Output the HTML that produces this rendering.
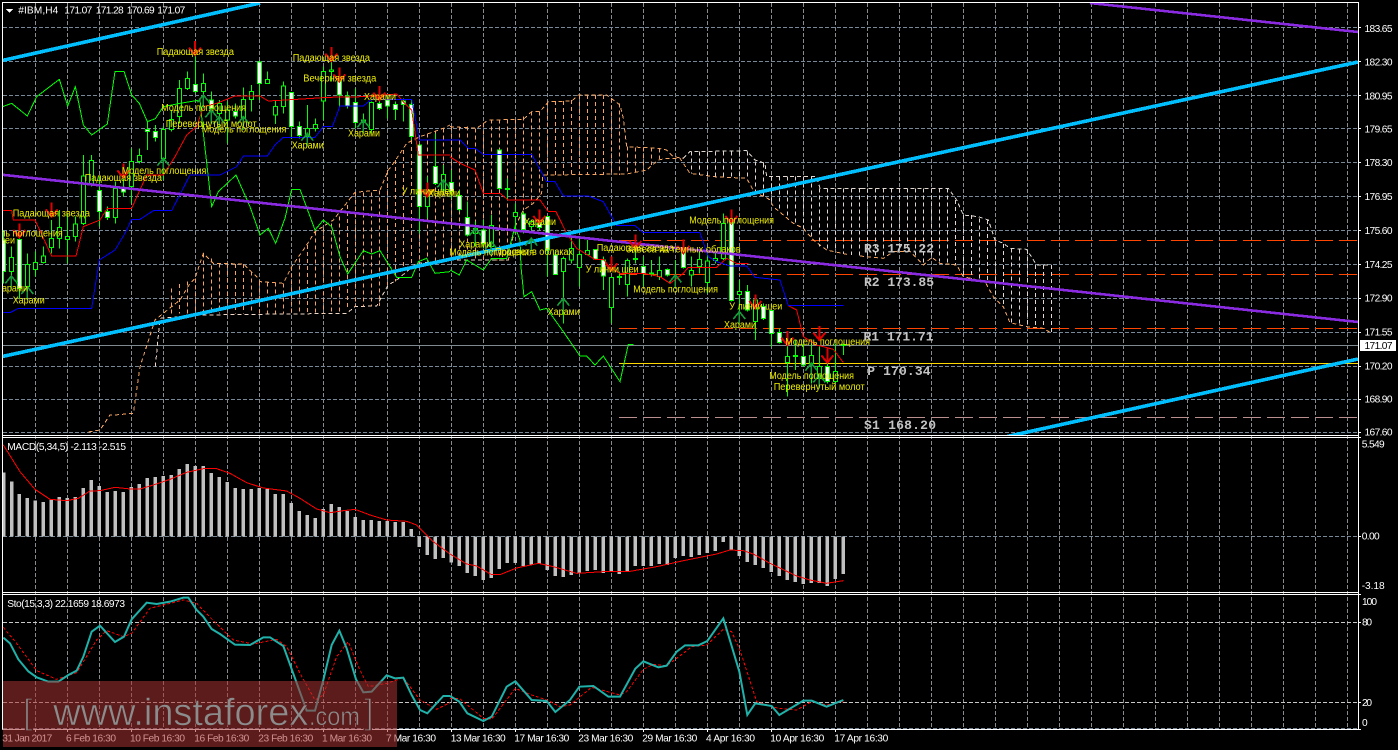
<!DOCTYPE html>
<html><head><meta charset="utf-8"><title>#IBM,H4</title>
<style>
html,body{margin:0;padding:0;background:#000;width:1398px;height:750px;overflow:hidden}
svg{display:block;shape-rendering:crispEdges}
text{font-family:"Liberation Sans","Noto Sans CJK SC",sans-serif}
.l text{font-size:10px;fill:#f0f000}
.a text{font-size:10.2px;fill:#fff}
.m text{font-family:"Liberation Mono",monospace;font-weight:bold;font-size:13px;fill:#c4c4c4}
.g{fill:none;stroke:#778899;stroke-dasharray:4 2}
.s{fill:none;stroke-width:3}
</style></head><body>
<svg width="1398" height="750" viewBox="0 0 1398 750" xmlns="http://www.w3.org/2000/svg">
<defs>
<clipPath id="c1"><rect x="3" y="3" width="1355" height="432"/></clipPath>
<clipPath id="c2"><rect x="3" y="438" width="1355" height="154"/></clipPath>
<path id="d" d="M0 -42V0M-18 -22L0 0L18 -22" fill="none" stroke="#e00000" stroke-width="6"/>
<path id="u" d="M0 40V0M-18 22L0 0L18 22" fill="none" stroke="#169a3a" stroke-width="5"/>
</defs>
<rect width="1398" height="750" fill="#000"/>

<!-- vertical grid -->
<path class="g" d="M35.5 3V729M67.5 3V729M99.5 3V729M131.5 3V729M163.5 3V729M195.5 3V729M227.5 3V729M259.5 3V729M291.5 3V729M323.5 3V729M355.5 3V729M387.5 3V729M419.5 3V729M451.5 3V729M483.5 3V729M515.5 3V729M547.5 3V729M579.5 3V729M611.5 3V729M643.5 3V729M675.5 3V729M707.5 3V729M739.5 3V729M771.5 3V729M803.5 3V729M835.5 3V729M867.5 3V729M899.5 3V729M931.5 3V729M963.5 3V729M995.5 3V729M1027.5 3V729M1059.5 3V729M1091.5 3V729M1123.5 3V729M1155.5 3V729M1187.5 3V729M1219.5 3V729M1251.5 3V729M1283.5 3V729M1315.5 3V729M1347.5 3V729" style="stroke:#858b90"/>
<!-- horizontal grid -->
<path class="g" d="M3 27.5H1358M3 61.5H1358M3 95.5H1358M3 128.5H1358M3 162.5H1358M3 196.5H1358M3 230.5H1358M3 264.5H1358M3 298.5H1358M3 332.5H1358M3 366.5H1358M3 399.5H1358M3 432.5H1358M3 536.5H1358M3 728.5H1358"/>
<path class="g" d="M3 622.5H1358M3 702.5H1358" style="stroke:#c8c8c8"/>

<g clip-path="url(#c1)">
<!-- levels -->
<path d="M619 240.5H1358M619 274.5H1358M619 328.5H1358" fill="none" stroke="#ff4500" stroke-dasharray="18 6"/>
<path d="M619 417.5H1358" fill="none" stroke="#bc8f8f" stroke-dasharray="18 6"/>
<path d="M619 363.5H1358" fill="none" stroke="#ffd700"/>
<path d="M3 345.5H1358" fill="none" stroke="#7f8a90"/>

<!-- cloud left (z1 coords) -->
<g transform="scale(.33333)" fill="none" stroke="#f4a460" stroke-width="3" stroke-dasharray="12 9">
<path d="M265 1296L300 1290L330 1245L345 1245L400 1240L420 1100L465 960L540 900L570 850L585 835L610 760L640 790L730 792L770 830L780 845L850 850L875 800L920 735L945 695L1000 660L1065 577L1140 570L1165 510L1180 490L1220 430L1260 410L1330 385L1350 375"/>
<path d="M466 1100L480 955L600 945L1040 940L1065 920L1130 918L1145 890L1165 855L1190 840L1250 790L1350 780" stroke="#f0d8c8"/>
<path d="M514 865V940M538 852V940M562 845V940M586 835V940M610 760V940M634 775V940M658 790V940M682 792V940M706 792V940M730 792V940M754 815V940M778 845V940M802 848V940M826 848V940M850 850V940M874 800V940M898 775V940M922 735V940M946 695V940M970 685V940M994 670V940M1018 650V940M1042 615V925M1066 577V920M1090 577V920M1114 577V920M1138 572V918M1162 510V855M1186 480V845M1210 450V800M1234 420V790M1258 410V780M1282 400V785M1306 395V785M1330 385V780"/>
</g>
<!-- cloud mid (z2 coords) -->
<g transform="scale(.33333) translate(1350 180)" fill="none" stroke="#f4a460" stroke-width="3" stroke-dasharray="12 9">
<path d="M0 200L80 205L115 180L220 178L245 155L270 155L295 125L365 123L385 105L470 105L510 135L520 175L530 260L625 265L650 270L670 290L700 295"/>
<path d="M130 600L175 600L195 500L220 450L250 430L275 400L278 345L295 345L530 342L590 330L625 300L650 295L690 295L720 340L790 350L890 355L915 400L945 410L960 420L970 440L1030 490L1060 505L1090 540L1130 570L1200 585"/>
<path d="M0 600H175" stroke="#f0d8c8"/>
<path d="M4 200V600M28 200V600M52 200V600M76 205V600M100 190V600M124 178V600M148 178V600M172 178V600M196 178V500M220 170V450M244 155V430M268 155V410M292 125V345M316 123V345M340 123V345M364 120V345M388 105V345M412 105V345M436 105V345M460 105V345M484 115V345M508 130V345M532 260V342M556 262V338M580 262V332M604 262V315M628 266V297"/>
<g stroke="#e0d8d0">
<path d="M700 295L720 275L890 272L915 300L945 310L950 350L1100 350L1110 385L1236 385"/>
<path d="M724 275V340M748 275V345M772 275V348M796 275V350M820 275V352M844 275V353M868 275V354M892 275V355M916 305V395M940 310V410M964 350V425M988 350V450M1012 350V470M1036 350V490M1060 350V505M1084 350V530M1108 385V560M1132 385V570M1156 385V575M1180 385V580M1204 385V585M1228 385V590"/>
</g>
</g>
<!-- cloud right (z7 coords) -->
<g transform="scale(.33333) translate(2580 510)" fill="none" stroke="#e0d8d0" stroke-width="3" stroke-dasharray="12 9">
<path d="M5 55H265L290 90L310 135L355 140L385 150L405 210L430 220L450 235L500 238L530 285H575"/>
<path d="M22 55V258M46 55V265M70 55V265M94 55V245M118 55V245M142 55V245M166 55V258M190 55V285M214 55V262M238 55V275M262 55V280M286 90V285M310 135V320M334 135V325M358 145V330M382 150V335M406 215V380M430 222V410M454 235V458M478 238V462M502 240V470M526 285V473M550 285V475M574 285V490"/>
<path d="M0 258L70 265L100 245L150 245L190 285L215 262L240 280L290 285L310 320L375 335L400 380L430 410L450 458L500 470L550 475L575 490" stroke="#f4a460"/>
</g>

<!-- candles z1 -->
<g transform="scale(.33333)" stroke="#00ff00" stroke-width="3" fill="none">
<path d="M10 690V850M34 740V860M58 700V895M82 760V895M106 755V830M130 740V790M154 660V760M178 630V745M202 640V790M226 650V725M250 465V675M274 465V560M298 530V680M322 620V660M346 545V670M370 500V590M394 445V610M418 445V490M442 365V450M466 375V425M490 380V540M514 330V395M538 240V370M562 215V270M586 125V280M610 220V300M634 275V345M658 300V350M682 305V430M706 310V355M730 262V360M754 255V335M778 183V300M802 215V250M826 300V372M850 245V340M874 277V415M898 365V415M922 315V430M946 355V395M970 200V360M994 170V245M1018 205V320M1042 275V325M1066 265V385M1090 340V400M1114 305V400M1138 300V330M1162 290V355M1186 305V360M1210 295V365M1234 300V420"/>
<path d="M28 772h12V815h-12zM76 793h12V860h-12zM100 787h12V808h-12zM124 768h12V787h-12zM148 715h12V743h-12zM172 683h12V716h-12zM196 710h12V718h-12zM220 672h12V710h-12zM244 528h12V670h-12zM268 482h12V555h-12zM340 565h12V652h-12zM388 485h12V560h-12zM412 467h12V485h-12zM484 388h12V475h-12zM508 358h12V388h-12zM532 265h12V350h-12zM556 235h12V265h-12zM604 250h12V275h-12zM652 310h12V340h-12zM676 330h12V360h-12zM724 298h12V355h-12zM748 275h12V298h-12zM796 238h12V250h-12zM820 320h12V345h-12zM844 258h12V320h-12zM916 385h12V410h-12zM940 374h12V385h-12zM964 215h12V303h-12zM988 210h12V214h-12zM1084 360h12V368h-12zM1108 308h12V388h-12z" fill="#000"/>
<path d="M4 720h12V815h-12zM52 718h12V865h-12zM292 572h12V635h-12zM316 635h12V652h-12zM364 566h12V576h-12zM436 388h12V395h-12zM460 395h12V412h-12zM580 253h12V274h-12zM628 300h12V325h-12zM700 334h12V348h-12zM772 186h12V250h-12zM868 277h12V380h-12zM892 380h12V407h-12zM1012 235h12V285h-12zM1036 288h12V318h-12zM1060 308h12V368h-12zM1132 310h12V325h-12zM1156 300h12V318h-12zM1180 313h12V328h-12zM1204 303h12V313h-12zM1228 313h12V410h-12z" fill="#fff"/>
</g>
<!-- candles z12 -->
<g transform="scale(.33333) translate(1200 270)" stroke="#00ff00" stroke-width="3" fill="none">
<path d="M58 165V430M82 260V385M106 130V285M130 225V310M154 240V325M178 300V365M202 335V440M226 395V470M250 390V475M274 375V475M298 178V300M322 265V330M346 340V430M370 365V430M394 390V420M418 370V420M442 380V560M466 480V555M490 500V700M514 440V520M538 440V590M562 450V495M586 478V510M610 500V600M634 562V700M658 545V585M682 505V620M706 440V520M730 500V590"/>
<path d="M76 320h12V350h-12zM124 253h12V300h-12zM220 415h12V430h-12zM268 407h12V470h-12zM340 368h12V380h-12zM388 395h12V410h-12zM484 505h12V545h-12zM508 475h12V510h-12zM532 493h12V532h-12zM556 482h12V493h-12zM628 562h12V652h-12zM676 512h12V583h-12zM316 295h12V298h-12zM652 559h12V562h-12zM700 506h12V509h-12z" fill="#000"/>
<path d="M52 165h12V350h-12zM100 230h12V280h-12zM148 278h12V305h-12zM172 317h12V358h-12zM196 382h12V435h-12zM244 420h12V460h-12zM292 180h12V295h-12zM364 372h12V418h-12zM412 392h12V412h-12zM436 380h12V480h-12zM460 495h12V553h-12zM580 478h12V507h-12zM604 510h12V558h-12zM724 530h12V550h-12z" fill="#fff"/>
</g>
<!-- candles z2 -->
<g transform="scale(.33333) translate(1350 180)" stroke="#00ff00" stroke-width="3" fill="none">
<path d="M604 600V650M628 590V660M652 625V650M676 600V660M700 540V625M724 590V680M748 570V640M772 575V700M796 570V610M820 460V600M844 480V725M868 660V780M892 675V755M916 705V840M940 730V780M964 750V860M988 805V850M1012 825V1010M1036 840V930M1060 850V920M1084 850V970M1108 860V980M1132 870V970M1156 850V970M1180 850V885"/>
<path d="M622 632h12V650h-12zM718 632h12V645h-12zM742 598h12V620h-12zM766 603h12V667h-12zM790 595h12V602h-12zM814 490h12V595h-12zM862 694h12V703h-12zM910 720h12V785h-12zM1006 890h12V908h-12zM1078 887h12V910h-12zM1102 920h12V955h-12zM1150 935h12V965h-12zM598 639h12V642h-12zM1030 887h12V890h-12zM1174 854h12V857h-12z" fill="#000"/>
<path d="M646 628h12V645h-12zM694 570h12V622h-12zM838 482h12V722h-12zM886 695h12V750h-12zM934 740h12V775h-12zM958 752h12V820h-12zM982 818h12V848h-12zM1054 890h12V915h-12zM1126 920h12V965h-12z" fill="#fff"/>
</g>

<!-- ichimoku z1 -->
<g transform="scale(.33333)" class="s">
<path class="s" stroke="#00ff00" d="M8 320L35 310L82 348L110 290L178 238L203 318L226 260L250 375L275 405L322 372L345 214L372 214L395 285L418 310L442 365L466 356L490 320L540 310L600 300L610 400L635 620L655 575L708 525L750 620L780 705L805 685L827 730L855 655L875 568L900 568L945 690L970 660L995 680L1020 770L1043 822L1090 752L1115 762L1140 752L1190 832L1235 832L1255 785L1280 775L1305 820L1350 815"/>
<path class="s" stroke="#ff0000" d="M8 632H35L40 660H105L155 768H228L250 680L300 660L322 625H395L440 525H490L525 470L560 405L590 380L610 320L650 310L705 288H780L805 303L890 298L985 292L1090 290L1190 282L1210 305L1235 330L1255 465H1350"/>
<path class="s" stroke="#0000ff" d="M8 938H30L55 925H275L298 780L345 750L375 700L395 658H420L460 632H515L570 525H660L710 500L730 468H802L825 435L850 412H945L970 380H997L1020 318H1090L1115 298H1235L1258 420H1350"/>
</g>
<!-- ichimoku z2 -->
<g transform="scale(.33333) translate(1350 180)">
<path class="s" stroke="#00ff00" d="M0 630L28 645L50 600L100 630L125 595L170 595L195 500L210 540L213 620L222 710L245 695L270 750L290 745L340 815L390 888L410 888L435 915L460 888L510 965L535 853H550"/>
<path class="s" stroke="#ff0000" d="M0 290L30 310L75 330L100 400H150L175 420H270L295 455H318L350 520L380 565L435 598H460L480 622L510 640H580L630 650L660 670L700 640L715 622H800L830 595L860 610H895M1015 737L1040 750L1060 830L1100 855L1150 868L1180 908"/>
<path class="s" stroke="#0000ff" d="M0 240H30L55 265H75L100 283H245L290 365H315L340 408H415L460 425L500 497H555L580 518H750L775 590L800 605L840 618H890L915 652L990 660L1015 737H1180"/>
</g>

<!-- trend lines -->
<path d="M0 61L260 3M0 357L1358 62M1005 437L1358 359" fill="none" stroke="#00bfff" stroke-width="3.6"/>
<path d="M0 174.5L1358 322M1090 3L1358 32" fill="none" stroke="#8a2be2" stroke-width="2.6"/>

<!-- arrows -->
<g transform="scale(.33333)">
<use href="#d" x="585" y="165"/><use href="#d" x="994" y="183"/><use href="#d" x="1018" y="245"/><use href="#d" x="1138" y="300"/><use href="#d" x="370" y="533"/><use href="#d" x="155" y="650"/><use href="#d" x="58" y="712"/><use href="#d" x="1282" y="590"/>
<use href="#d" x="1618" y="670"/><use href="#d" x="1834" y="812"/><use href="#d" x="2050" y="760"/><use href="#d" x="2194" y="670"/><use href="#d" x="2266" y="925"/><use href="#d" x="2362" y="1035"/><use href="#d" x="2458" y="1020"/><use href="#d" x="2482" y="1088"/><use href="#d" x="1906" y="745"/>
<use href="#u" x="610" y="285"/><use href="#u" x="634" y="330"/><use href="#u" x="658" y="350"/><use href="#u" x="730" y="350"/><use href="#u" x="922" y="400"/><use href="#u" x="1090" y="360"/><use href="#u" x="490" y="475"/><use href="#u" x="34" y="828"/><use href="#u" x="82" y="860"/><use href="#u" x="1330" y="540"/>
<use href="#u" x="1426" y="685"/><use href="#u" x="1474" y="725"/><use href="#u" x="1594" y="715"/><use href="#u" x="1690" y="895"/><use href="#u" x="2026" y="825"/><use href="#u" x="2218" y="935"/><use href="#u" x="2434" y="1090"/><use href="#u" x="2458" y="1125"/>
</g>

<!-- pattern labels -->
<g class="l">
<text x="156.7" y="55" textLength="77.3" lengthAdjust="spacingAndGlyphs">Падающая звезда</text>
<text x="292.7" y="61" textLength="77.3" lengthAdjust="spacingAndGlyphs">Падающая звезда</text>
<text x="303.3" y="81.7" textLength="73" lengthAdjust="spacingAndGlyphs">Вечерняя звезда</text>
<text x="364" y="100" textLength="32" lengthAdjust="spacingAndGlyphs">Харами</text>
<text x="161.3" y="111" textLength="84.7" lengthAdjust="spacingAndGlyphs">Модель поглощения</text>
<text x="165.7" y="127" textLength="91" lengthAdjust="spacingAndGlyphs">Перевернутый молот</text>
<text x="201.7" y="132.7" textLength="84.7" lengthAdjust="spacingAndGlyphs">Модель поглощения</text>
<text x="348" y="136.7" textLength="32" lengthAdjust="spacingAndGlyphs">Харами</text>
<text x="291.7" y="148.7" textLength="32" lengthAdjust="spacingAndGlyphs">Харами</text>
<text x="121.7" y="174" textLength="84.7" lengthAdjust="spacingAndGlyphs">Модель поглощения</text>
<text x="84.7" y="181" textLength="77.3" lengthAdjust="spacingAndGlyphs">Падающая звезда</text>
<text x="401.7" y="194.5" textLength="53" lengthAdjust="spacingAndGlyphs">У линии шеи</text>
<text x="428" y="196.7" textLength="32" lengthAdjust="spacingAndGlyphs">Харами</text>
<text x="12.7" y="216.7" textLength="77.3" lengthAdjust="spacingAndGlyphs">Падающая звезда</text>
<text x="-22" y="236.7" textLength="84.7" lengthAdjust="spacingAndGlyphs">Модель поглощения</text>
<text x="-38" y="243.3" textLength="53" lengthAdjust="spacingAndGlyphs">У линии шеи</text>
<text x="-4" y="291.7" textLength="32" lengthAdjust="spacingAndGlyphs">Харами</text>
<text x="12.7" y="303.3" textLength="32" lengthAdjust="spacingAndGlyphs">Харами</text>
<text x="524" y="225" textLength="32" lengthAdjust="spacingAndGlyphs">Харами</text>
<text x="459.3" y="247.7" textLength="32" lengthAdjust="spacingAndGlyphs">Харами</text>
<text x="449.3" y="255.7" textLength="84.7" lengthAdjust="spacingAndGlyphs">Модель поглощения</text>
<text x="495" y="255" textLength="78" lengthAdjust="spacingAndGlyphs">Просвет в облаках</text>
<text x="547.7" y="315" textLength="32" lengthAdjust="spacingAndGlyphs">Харами</text>
<text x="596.7" y="251" textLength="77.3" lengthAdjust="spacingAndGlyphs">Падающая звезда</text>
<text x="626" y="252.7" textLength="114.7" lengthAdjust="spacingAndGlyphs">Завеса из темных облаков</text>
<text x="585.7" y="272.3" textLength="53" lengthAdjust="spacingAndGlyphs">У линии шеи</text>
<text x="633.3" y="292.7" textLength="84.7" lengthAdjust="spacingAndGlyphs">Модель поглощения</text>
<text x="689.3" y="223.7" textLength="84.7" lengthAdjust="spacingAndGlyphs">Модель поглощения</text>
<text x="729.3" y="309.3" textLength="53" lengthAdjust="spacingAndGlyphs">У линии шеи</text>
<text x="724" y="328" textLength="32" lengthAdjust="spacingAndGlyphs">Харами</text>
<text x="785.3" y="345" textLength="84.7" lengthAdjust="spacingAndGlyphs">Модель поглощения</text>
<text x="769.3" y="379" textLength="84.7" lengthAdjust="spacingAndGlyphs">Модель поглощения</text>
<text x="773.7" y="390" textLength="91" lengthAdjust="spacingAndGlyphs">Перевернутый молот</text>
</g>
<g class="m">
<text x="864" y="252.5" textLength="70">R3 175.22</text>
<text x="864" y="286" textLength="70">R2 173.85</text>
<text x="863.5" y="340.5" textLength="70">R1 171.71</text>
<text x="867.3" y="375" textLength="63.3">P 170.34</text>
<text x="864" y="429" textLength="72">S1 168.20</text>
</g>
</g>

<!-- MACD -->
<g clip-path="url(#c2)">
<g transform="translate(0 430) scale(.33333)">
<path fill="none" stroke="#c0c0c0" stroke-width="10" d="M11 128V319M35 155V319M58 192V319M82 204V319M106 212V319M130 216V319M154 209V319M178 201V319M202 204V319M226 201V319M250 174V319M274 150V319M298 168V319M322 186V319M346 183V319M370 186V319M394 171V319M418 162V319M442 144V319M466 141V319M490 138V319M514 135V319M538 117V319M562 102V319M586 108V319M610 108V319M634 129V319M658 141V319M682 156V319M706 174V319M730 177V319M754 177V319M778 174V319M802 174V319M826 192V319M850 192V319M874 219V319M898 243V319M922 255V319M946 264V319M970 237V319M994 222V319M1018 231V319M1042 243V319M1066 261V319M1090 270V319M1114 270V319M1138 273V319M1162 273V319M1186 276V319M1210 276V319M1234 297V319M1258 319V351M1282 319V375M1306 319V387M1330 319V384"/>
<path class="s" stroke="#ff0000" d="M10 45L60 125L105 178L150 208L200 212L235 205L270 183L300 182L345 172L390 177H420L460 165L510 148L560 127L610 116H650L690 130L740 158L790 174L860 183L900 205L950 237L990 248L1030 242L1065 238L1110 255L1160 270L1220 274L1250 285L1300 335L1350 372"/>
</g>
<g transform="translate(450 430) scale(.33333)">
<path fill="none" stroke="#c0c0c0" stroke-width="10" d="M4 319V397M28 319V408M52 319V429M76 319V438M100 319V450M124 319V444M148 319V417M172 319V399M196 319V399M220 319V408M244 319V405M268 319V402M292 319V420M316 319V438M340 319V441M364 319V435M388 319V429M412 319V423M436 319V420M460 319V429M484 319V423M508 319V432M532 319V423M556 319V408M580 319V408M604 319V408M628 319V402M652 319V405M676 319V384M700 319V378M724 319V381M748 319V375M772 319V369M796 319V363M820 319V336M844 319V360M868 319V378M892 319V396M916 319V405M940 319V414M964 319V426M988 319V438M1012 319V450M1036 319V456M1060 319V462M1084 319V459M1108 319V459M1132 319V468M1156 319V447M1180 319V432"/>
<path class="s" stroke="#ff0000" d="M0 372L50 402L80 408L125 434H150L200 414L265 400L310 410L380 430L460 425L540 424L620 410L700 392L800 372L840 360L880 362L910 372L960 400L1040 438L1080 450L1130 460L1180 452"/>
</g>
</g>

<!-- Stochastic -->
<g transform="translate(0 430) scale(.33333)">
<path fill="none" stroke="#ff0000" stroke-width="3" stroke-dasharray="9 6" d="M10 592L50 640L110 722L170 748L230 728L290 630L320 602L370 620L395 610L450 535L490 525L550 510L590 520L640 572L700 630L760 642L830 628L860 650L900 730L945 810L970 795L1010 680L1045 635L1075 710L1105 770L1160 760L1210 743L1260 810L1310 838L1350 818"/>
<path fill="none" stroke="#20b2aa" stroke-width="6" style="shape-rendering:auto" d="M10 623L30 640L55 688L85 724L110 742L145 755H175L205 735L230 722L250 680L275 605L300 587L345 636L372 620L395 568L440 518L470 522L510 515L550 503H565L590 540L610 560L635 597L660 612L705 644L750 645L790 622H810L850 648L885 745L920 842H945L970 750L995 645L1018 602L1040 655L1068 748L1090 787L1115 785L1160 736L1185 745L1210 743L1235 795L1260 840L1282 850L1330 798H1350"/>
</g>
<g transform="translate(450 430) scale(.33333)">
<path fill="none" stroke="#ff0000" stroke-width="3" stroke-dasharray="9 6" d="M0 805H28L100 865L125 868L196 775L245 795L290 810L330 830L360 825L425 772L510 795L530 785L580 718L610 703L650 707L700 670L725 650L770 645L820 598L845 605L870 660L920 815L985 835L1040 840L1085 815L1130 825L1180 815"/>
<path fill="none" stroke="#20b2aa" stroke-width="6" style="shape-rendering:auto" d="M0 798L28 815L52 850L100 873L125 860L170 770L196 754L245 810L290 813L316 846L360 810L388 770L430 768L475 800H510L556 716L580 694L625 712L650 707L680 665L705 646H745L772 633L820 565L868 725L892 855L916 820L965 828L988 855L1060 812H1085L1130 830L1180 810"/>
</g>

<!-- frame -->
<path fill="none" stroke="#fff" d="M2.5 729.5V2.5H1358.5V729.5H2.5M3 435.5H1358.5M3 437.5H1358.5M3 592.5H1358.5M3 594.5H1358.5"/>
<path fill="none" stroke="#fff" d="M1358 27.5h3M1358 61.5h3M1358 95.5h3M1358 128.5h3M1358 162.5h3M1358 196.5h3M1358 230.5h3M1358 264.5h3M1358 298.5h3M1358 332.5h3M1358 366.5h3M1358 399.5h3M1358 432.5h3M1358 437.5h3M1358 536.5h3M1358 594.5h3M1358 622.5h3M1358 702.5h3M1358 729.5h3"/>
<path fill="none" stroke="#fff" d="M35.5 729v3M67.5 729v3M131.5 729v3M195.5 729v3M259.5 729v3M323.5 729v3M387.5 729v3M451.5 729v3M515.5 729v3M579.5 729v3M643.5 729v3M707.5 729v3M771.5 729v3M835.5 729v3"/>

<!-- header -->
<path d="M6 9h7l-3.5 4z" fill="#fff"/>
<g class="a">
<text x="18.3" y="13.7" textLength="40">#IBM,H4</text>
<text x="64.3" y="13.7" textLength="28">171.07</text>
<text x="95.7" y="13.7" textLength="28">171.28</text>
<text x="126.7" y="13.7" textLength="28">170.69</text>
<text x="157.3" y="13.7" textLength="28">171.07</text>
<text x="7.3" y="450" textLength="118.7">MACD(5,34,5) -2.113 -2.515</text>
<text x="7.3" y="607" textLength="117.7">Sto(15,3,3) 22.1659 18.6973</text>

<text x="1364.5" y="32" textLength="28">183.65</text>
<text x="1364.5" y="65.5" textLength="28">182.30</text>
<text x="1364.5" y="99.5" textLength="28">180.95</text>
<text x="1364.5" y="132.5" textLength="28">179.65</text>
<text x="1364.5" y="166" textLength="28">178.30</text>
<text x="1364.5" y="200" textLength="28">176.95</text>
<text x="1364.5" y="234" textLength="28">175.60</text>
<text x="1364.5" y="268" textLength="28">174.25</text>
<text x="1364.5" y="301.5" textLength="28">172.90</text>
<text x="1364.5" y="335.7" textLength="28">171.55</text>
<text x="1364.5" y="369.7" textLength="28">170.20</text>
<text x="1364.5" y="402.7" textLength="28">168.90</text>
<text x="1364.5" y="435.7" textLength="28">167.60</text>
<text x="1361.7" y="447.7" textLength="23">5.549</text>
<text x="1361.7" y="539.7" textLength="18">0.00</text>
<text x="1361.7" y="589" textLength="23">-3.18</text>
<text x="1362" y="605" textLength="15">100</text>
<text x="1362" y="625.7" textLength="10">80</text>
<text x="1362" y="706" textLength="10">20</text>
<text x="1362" y="726">0</text>

<text x="2.3" y="741.7" textLength="50">31 Jan 2017</text>
<text x="66" y="741.7" textLength="50">6 Feb 16:30</text>
<text x="130" y="741.7" textLength="55">10 Feb 16:30</text>
<text x="194.3" y="741.7" textLength="55">16 Feb 16:30</text>
<text x="258.3" y="741.7" textLength="55">23 Feb 16:30</text>
<text x="322" y="741.7" textLength="50">1 Mar 16:30</text>
<text x="386" y="741.7" textLength="50">7 Mar 16:30</text>
<text x="450.7" y="741.7" textLength="55">13 Mar 16:30</text>
<text x="514.3" y="741.7" textLength="55">17 Mar 16:30</text>
<text x="578.3" y="741.7" textLength="55">23 Mar 16:30</text>
<text x="642.3" y="741.7" textLength="55">29 Mar 16:30</text>
<text x="706" y="741.7" textLength="49">4 Apr 16:30</text>
<text x="770.3" y="741.7" textLength="54">10 Apr 16:30</text>
<text x="834.3" y="741.7" textLength="54">17 Apr 16:30</text>
</g>
<rect x="1360" y="340" width="36" height="11" fill="#fff"/>
<text x="1364.5" y="349" textLength="28" style="font-size:10.2px;fill:#000">171.07</text>

<!-- watermark -->
<rect x="3" y="681" width="394" height="66" fill="rgb(167,51,51)" fill-opacity=".55"/>
<g fill="#8c8c8c" stroke="#5c1c1c" stroke-width=".6" style="shape-rendering:auto">
<text x="23" y="723.5" font-size="35" stroke-width="1.4">[</text>
<text x="53.3" y="725" font-size="38" textLength="255" lengthAdjust="spacingAndGlyphs">www.instaforex</text>
<text x="309" y="725" font-size="26" textLength="51" lengthAdjust="spacingAndGlyphs">.com</text>
<text x="364" y="723.5" font-size="35" stroke-width="1.4">]</text>
</g>
</svg>
</body></html>
